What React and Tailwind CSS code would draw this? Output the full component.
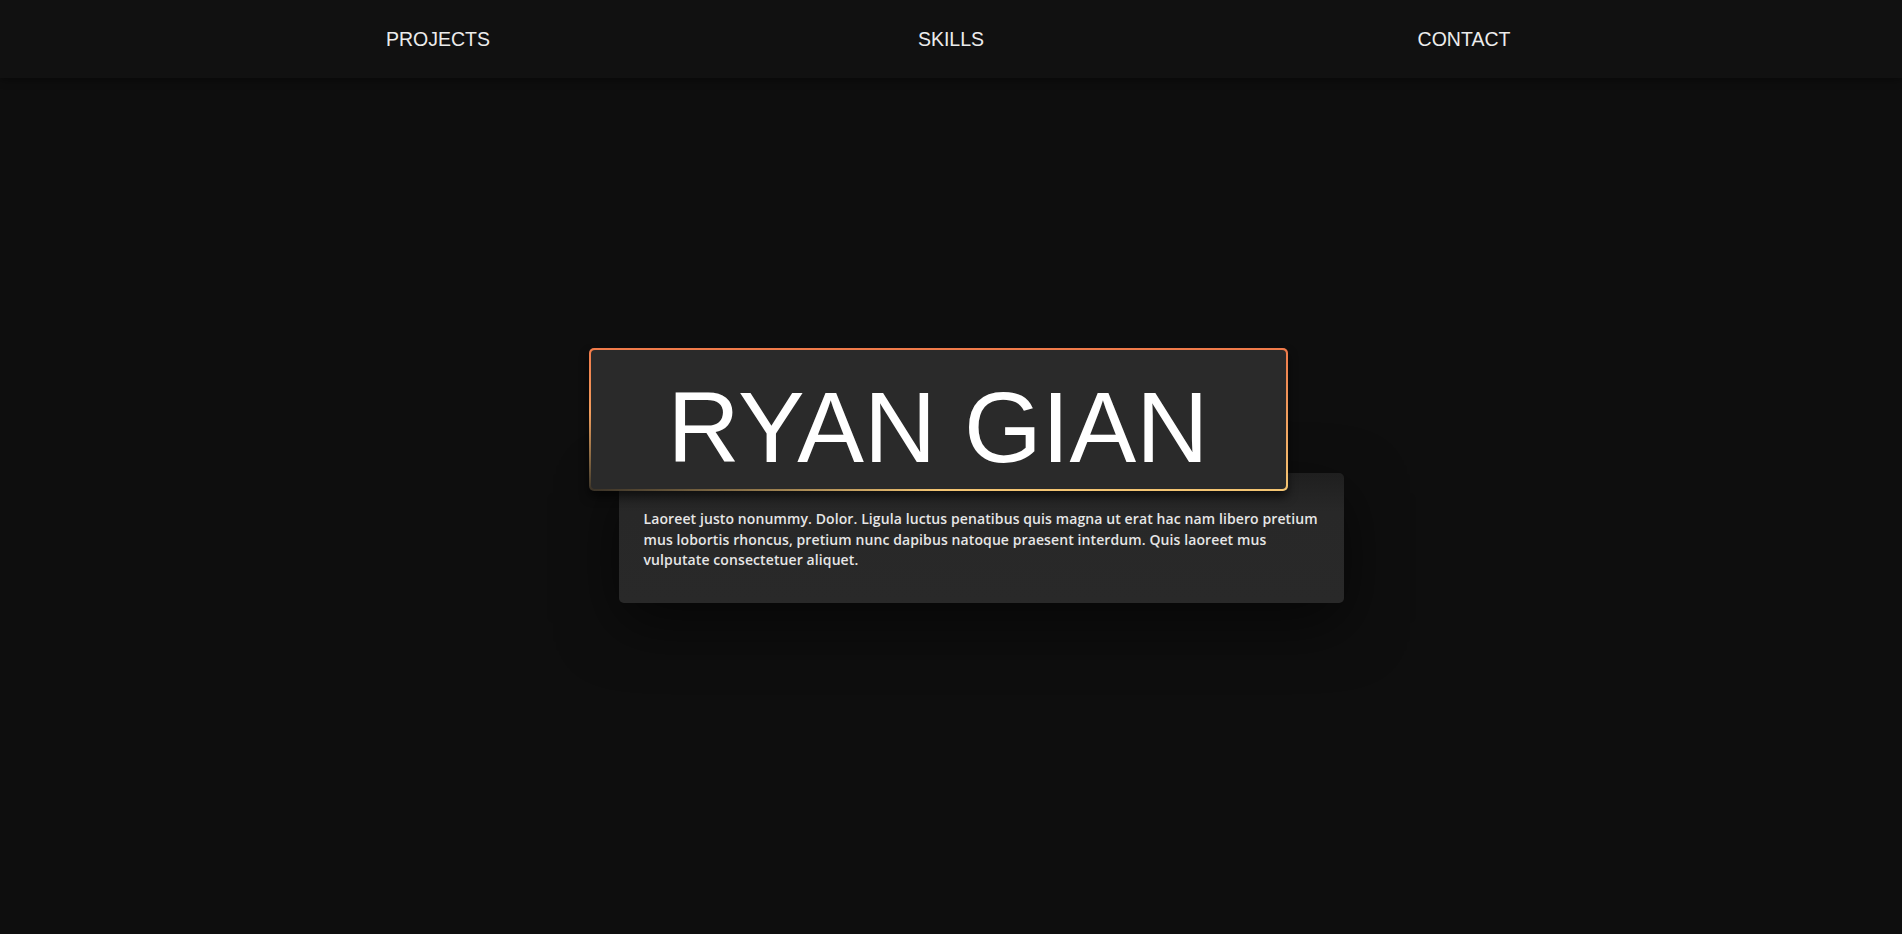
import React from 'react';

const navItems = ['PROJECTS', 'SKILLS', 'CONTACT'];

const descLines = [
  'Laoreet justo nonummy. Dolor. Ligula luctus penatibus quis magna ut erat hac nam libero pretium',
  'mus lobortis rhoncus, pretium nunc dapibus natoque praesent interdum. Quis laoreet mus',
  'vulputate consectetuer aliquet.',
];

const App = () => {
  return (
    <div className="min-h-screen bg-[#0e0e0e]">
      {/* Header */}
      <header className="h-[78px] bg-[#111111] shadow-[0_2px_8px_rgba(0,0,0,0.4)]">
        <nav className="w-[1539px] h-full mx-auto pt-[2px] grid grid-cols-3 items-center text-center">
          {navItems.map(item => (
            <a
              key={item}
              href="#"
              className="text-[19.5px] text-[#ececec] font-['Liberation_Sans',Arial,sans-serif]"
            >
              {item}
            </a>
          ))}
        </nav>
      </header>

      {/* Hero */}
      <main className="pt-[270px] pb-[200px]">
        <div className="w-[755px] mx-auto translate-x-[15px]">
          <div className="relative z-10 w-[699px] p-[2px] rounded-[5px] bg-[radial-gradient(ellipse_50%_55%_at_0%_100%,rgba(40,36,32,0.92),rgba(40,36,32,0)),linear-gradient(to_bottom,#f07a4a,#f4c673)] shadow-[0_6px_10px_rgba(0,0,0,0.55)]">
            <div className="rounded-[4px] bg-[#2a2a2a] pt-[27px] pb-[12px] text-center">
              <h1 className="text-[100px] leading-[100px] text-white font-['Liberation_Sans',Arial,sans-serif]">
                RYAN GIAN
              </h1>
            </div>
          </div>

          <div className="relative -mt-[18px] ml-[30px] w-[725px] rounded-[5px] bg-[linear-gradient(to_bottom,#1f1f1f_0%,#282828_30%,#292929_100%)] pt-[36px] pb-[32px] px-[25px] shadow-[0_20px_60px_rgba(0,0,0,0.55)]">
            <p className="text-[14px] leading-[20.5px] text-[#e6e6e6] font-semibold tracking-[0.1px] font-['Open_Sans','Noto_Sans',sans-serif]">
              {descLines.map((line, i) => (
                <span key={i} className="block whitespace-nowrap">{line}</span>
              ))}
            </p>
          </div>
        </div>
      </main>
    </div>
  );
};

export default App;
